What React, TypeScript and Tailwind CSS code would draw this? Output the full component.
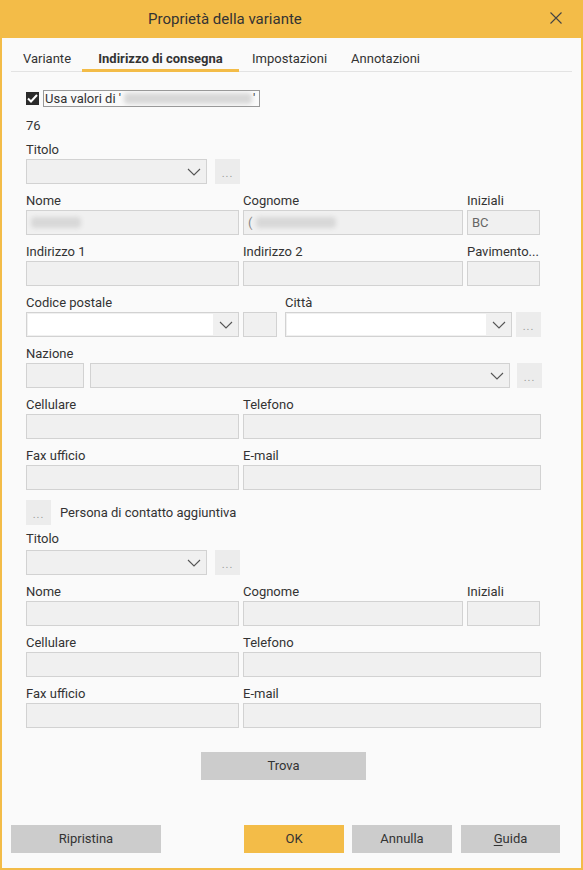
import React from "react";

const font = { fontFamily: "Roboto, 'Noto Sans', sans-serif" };

function Label({ children, className = "" }: { children?: React.ReactNode; className?: string }) {
  return (
    <div className={"h-[16px] text-[13px] leading-[16px] text-[#333] whitespace-nowrap " + className}>
      {children}
    </div>
  );
}

function Field({ children, className = "" }: { children?: React.ReactNode; className?: string }) {
  return (
    <div
      className={
        "h-[25px] bg-[#f0f0f0] border border-[#d2d2d2] flex items-center px-[4px] text-[13px] text-[#666] " +
        className
      }
    >
      {children}
    </div>
  );
}

function Chevron() {
  return (
    <svg width="14" height="8" viewBox="0 0 14 8" className="shrink-0">
      <path d="M1 1 L7 7 L13 1" fill="none" stroke="#555" strokeWidth="1.1" />
    </svg>
  );
}

function Combo({ white = false, className = "" }: { white?: boolean; className?: string }) {
  return (
    <div className={"h-[25px] bg-[#f0f0f0] border border-[#d2d2d2] flex items-center " + className}>
      <div className="flex-1 h-full p-[1px]">
        {white && <div className="h-full bg-white" />}
      </div>
      <div className="w-[24px] flex justify-center">
        <Chevron />
      </div>
    </div>
  );
}

function Dots({ className = "" }: { className?: string }) {
  return (
    <div
      className={
        "w-[25px] h-[25px] bg-[#ececec] flex items-center justify-center text-[11px] text-[#999] tracking-[1px] leading-none pt-[3px] " +
        className
      }
    >
      ...
    </div>
  );
}

function Blur({ w }: { w: number }) {
  return (
    <span
      className="inline-block h-[11px] bg-[#d8d8d8] blur-[2px] rounded-sm"
      style={{ width: w }}
    />
  );
}

function Button({ children, className = "" }: { children?: React.ReactNode; className?: string }) {
  return (
    <div
      className={
        "h-[28px] flex items-center justify-center text-[13px] text-[#333] " + className
      }
    >
      {children}
    </div>
  );
}

const grid = "grid grid-cols-[213px_220px_73px] gap-x-[4px]";

export default function App() {
  return (
    <div className="w-[583px] h-[870px] bg-[#fafafa] border-2 border-[#f3bc48] flex flex-col" style={font}>
      {/* title bar */}
      <div className="h-[36px] bg-[#f3bc48] flex items-center relative shrink-0">
        <div className="pl-[146px] text-[15px] text-[#333] -mt-[1px]">Proprietà della variante</div>
        <svg width="12" height="12" viewBox="0 0 12 12" className="absolute right-[19px] top-[10px]">
          <path d="M0.5 0.5 L11.5 11.5 M11.5 0.5 L0.5 11.5" stroke="#444" strokeWidth="1.1" />
        </svg>
      </div>

      {/* tabs */}
      <div className="mx-[9px] mt-[9px] h-[25px] border-b border-[#e3e3e3] flex items-stretch text-[13px] text-[#333]">
        <div className="pl-[12px] pr-[11px] flex items-center">Variante</div>
        <div className="w-[157px] flex items-center justify-center font-bold border-b-[3px] border-[#f3bc48] -mb-[1px] pt-[2px]">
          Indirizzo di consegna
        </div>
        <div className="pl-[13px] pr-[12px] flex items-center">Impostazioni</div>
        <div className="pl-[12px] flex items-center">Annotazioni</div>
      </div>

      <div className="pl-[24px] flex flex-col">
        {/* checkbox */}
        <div className="mt-[18px] flex items-center h-[17px]">
          <div className="w-[13px] h-[13px] bg-[#2b2b2b] flex items-center justify-center">
            <svg width="11" height="9" viewBox="0 0 11 9">
              <path d="M1 4.5 L4 7.5 L10 1" fill="none" stroke="#fff" strokeWidth="2" />
            </svg>
          </div>
          <div className="ml-[4px] h-[17px] w-[217px] border border-[#999] flex items-center text-[13px] leading-[15px] text-[#333] pl-[1px] whitespace-nowrap overflow-hidden">
            <span>Usa valori di '</span>
            <span className="ml-[3px] flex items-center"><Blur w={128} /></span>
            <span className="ml-[1px]">'</span>
          </div>
        </div>

        <div className="mt-[11px] text-[13px] leading-[16px] text-[#333]">76</div>

        {/* Titolo */}
        <Label className="mt-[8px]">Titolo</Label>
        <div className="mt-[1px] flex gap-[8px]">
          <Combo className="w-[181px]" />
          <Dots />
        </div>

        <div className={grid + " mt-[9px]"}>
          <Label>Nome</Label>
          <Label>Cognome</Label>
          <Label>Iniziali</Label>
          <Field className="mt-[1px]"><Blur w={50} /></Field>
          <Field className="mt-[1px]">
            <span className="text-[#888]">(</span>
            <span className="ml-[4px] flex items-center"><Blur w={80} /></span>
          </Field>
          <Field className="mt-[1px]">BC</Field>
        </div>

        <div className={grid + " mt-[9px]"}>
          <Label>Indirizzo 1</Label>
          <Label>Indirizzo 2</Label>
          <Label>Pavimento...</Label>
          <Field className="mt-[1px]" />
          <Field className="mt-[1px]" />
          <Field className="mt-[1px]" />
        </div>

        {/* Codice postale / Città */}
        <div className="mt-[9px] flex">
          <Label className="w-[259px]">Codice postale</Label>
          <Label>Città</Label>
        </div>
        <div className="mt-[1px] flex items-center">
          <Combo white className="w-[213px]" />
          <Field className="w-[34px] ml-[4px]" />
          <Combo white className="w-[227px] ml-[8px]" />
          <Dots className="ml-[4px]" />
        </div>

        {/* Nazione */}
        <Label className="mt-[9px]">Nazione</Label>
        <div className="mt-[1px] flex items-center">
          <Field className="w-[58px]" />
          <Combo className="w-[420px] ml-[6px]" />
          <Dots className="ml-[7px]" />
        </div>

        <div className={grid + " mt-[9px]"}>
          <Label>Cellulare</Label>
          <Label className="col-span-2">Telefono</Label>
          <Field className="mt-[1px]" />
          <Field className="mt-[1px] w-[298px]" />
        </div>

        <div className={grid + " mt-[9px]"}>
          <Label>Fax ufficio</Label>
          <Label className="col-span-2">E-mail</Label>
          <Field className="mt-[1px]" />
          <Field className="mt-[1px] w-[298px]" />
        </div>

        {/* additional contact */}
        <div className="mt-[10px] flex items-center">
          <Dots className="w-[24px] h-[24px]" />
          <span className="ml-[9px] text-[13px] text-[#333]">Persona di contatto aggiuntiva</span>
        </div>

        <Label className="mt-[6px]">Titolo</Label>
        <div className="mt-[3px] flex gap-[8px]">
          <Combo className="w-[181px]" />
          <Dots />
        </div>

        <div className={grid + " mt-[9px]"}>
          <Label>Nome</Label>
          <Label>Cognome</Label>
          <Label>Iniziali</Label>
          <Field className="mt-[1px]" />
          <Field className="mt-[1px]" />
          <Field className="mt-[1px]" />
        </div>

        <div className={grid + " mt-[9px]"}>
          <Label>Cellulare</Label>
          <Label className="col-span-2">Telefono</Label>
          <Field className="mt-[1px]" />
          <Field className="mt-[1px] w-[298px]" />
        </div>

        <div className={grid + " mt-[9px]"}>
          <Label>Fax ufficio</Label>
          <Label className="col-span-2">E-mail</Label>
          <Field className="mt-[1px]" />
          <Field className="mt-[1px] w-[298px]" />
        </div>

        <div className="mt-[24px] pl-[175px]">
          <Button className="w-[165px] bg-[#cccccc]">Trova</Button>
        </div>
      </div>

      {/* footer */}
      <div className="mt-auto mb-[15px] px-[9px] flex">
        <Button className="w-[150px] bg-[#cccccc]">Ripristina</Button>
        <Button className="w-[100px] bg-[#f3bc48] ml-[83px]">OK</Button>
        <Button className="w-[100px] bg-[#cccccc] ml-[8px]">Annulla</Button>
        <Button className="w-[99px] bg-[#cccccc] ml-[9px]">
          <span className="underline underline-offset-2">G</span>uida
        </Button>
      </div>
    </div>
  );
}
